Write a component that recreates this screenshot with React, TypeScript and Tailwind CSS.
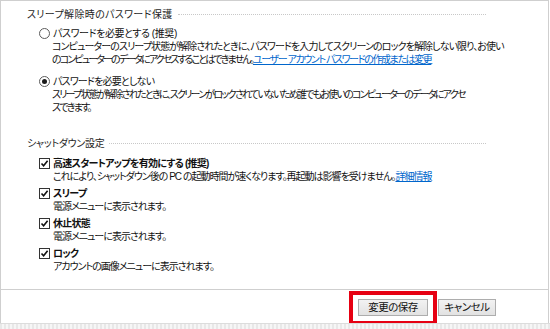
import React from 'react';

const font = "font-['Liberation_Sans','Noto_Sans_CJK_JP',sans-serif] [font-feature-settings:'palt']";

function Radio({ checked }: { checked?: boolean }) {
    return (
        <span className="w-[11px] h-[11px] rounded-full border border-[#5c5c5c] bg-white flex items-center justify-center shrink-0">
            {checked && <span className="w-[5px] h-[5px] rounded-full bg-[#1a1a1a]" />}
        </span>
    );
}

function Check() {
    return (
        <span className="w-[11px] h-[11px] border border-[#333] bg-white flex items-center justify-center shrink-0">
            <svg width="9" height="9" viewBox="0 0 9 9">
                <path d="M1.5 4.5 L3.6 6.8 L7.6 1.8" fill="none" stroke="#111" strokeWidth="1.6" />
            </svg>
        </span>
    );
}

function GroupTitle({ title, tracking }: { title: string; tracking: string }) {
    return (
        <div className="flex items-center gap-[5px] pl-[26px] pr-[62px] h-[16px]">
            <span className={`whitespace-nowrap text-[#1e1e1e] ${tracking}`}>{title}</span>
            <span className="flex-1 border-t border-dotted border-[#c8c8c8]" />
        </div>
    );
}

function CheckItem({ label, desc }: { label: string; desc: React.ReactNode }) {
    return (
        <div className="pl-[38px]">
            <div className="flex items-center gap-[3px] h-[14px]">
                <Check />
                <span className="font-bold whitespace-nowrap tracking-[-0.75px]">{label}</span>
            </div>
            <div className="pl-[14px] h-[14px] leading-[14px] whitespace-nowrap tracking-[-1px]">{desc}</div>
        </div>
    );
}

export default function App() {
    return (
        <div className={`w-[550px] h-[329px] bg-white flex flex-col text-[10px] leading-[13px] tracking-[-0.9px] text-[#111] ${font}`}>
            <div className="flex-1 flex flex-col border-l border-r border-t border-[#cfcfcf] mr-[1px]">
                <div className="pt-[5px]">
                    <GroupTitle title="スリープ解除時のパスワード保護" tracking="tracking-[0.35px]" />
                </div>

                {/* Password options */}
                <div className="pl-[38px] mt-[4px]">
                    <div className="flex items-center gap-[3px] h-[14px]">
                        <Radio />
                        <span className="whitespace-nowrap tracking-[-0.4px]">パスワードを必要とする (推奨)</span>
                    </div>
                    <div className="pl-[13px] whitespace-nowrap">
                        <div>コンピューターのスリープ状態が解除されたときに、パスワードを入力してスクリーンのロックを解除しない限り、お使い</div>
                        <div>
                            <span className="tracking-[-1.9px]">のコンピューターのデータにアクセスすることはできません。</span>
                            <span className="text-[#0066cc] underline tracking-[-1.4px]">ユーザー アカウント パスワードの作成または変更</span>
                        </div>
                    </div>

                    <div className="flex items-center gap-[3px] h-[14px] mt-[8px]">
                        <Radio checked />
                        <span className="whitespace-nowrap tracking-[-0.8px]">パスワードを必要としない</span>
                    </div>
                    <div className="pl-[13px] whitespace-nowrap tracking-[-1.75px]">
                        <div>スリープ状態が解除されたときに、スクリーンがロックされていないため誰でもお使いのコンピューターのデータにアクセ</div>
                        <div>スできます。</div>
                    </div>
                </div>

                <div className="mt-[21px]">
                    <GroupTitle title="シャットダウン設定" tracking="tracking-[-0.3px]" />
                </div>

                <div className="flex flex-col gap-[2px] mt-[5px]">
                    <CheckItem
                        label="高速スタートアップを有効にする (推奨)"
                        desc={<>これにより、シャットダウン後の PC の起動時間が速くなります。再起動は影響を受けません。<span className="text-[#0066cc] underline">詳細情報</span></>}
                    />
                    <CheckItem label="スリープ" desc="電源メニューに表示されます。" />
                    <CheckItem label="休止状態" desc="電源メニューに表示されます。" />
                    <CheckItem label="ロック" desc="アカウントの画像メニューに表示されます。" />
                </div>

                <div className="mt-auto border-t border-[#cfcfcf] h-[34px] flex items-start justify-end pr-[52px] tracking-normal">
                    <div className="border-[4px] border-[#e60012] px-[5px] pt-[4px] pb-[5px] mt-[1px] flex">
                        <button className="w-[70px] h-[17px] border border-[#adadad] bg-gradient-to-b from-[#f2f2f2] to-[#e2e2e2] text-[10.5px] leading-[15px] tracking-[-0.5px]">変更の保存</button>
                    </div>
                    <button className="w-[58px] h-[17px] mt-[9px] ml-[1px] border border-[#adadad] bg-gradient-to-b from-[#f2f2f2] to-[#e2e2e2] text-[10.5px] leading-[15px] tracking-[-0.5px]">キャンセル</button>
                </div>
            </div>
            <div className="h-[6px] bg-[repeating-linear-gradient(90deg,#e8e8e8_0px,#e8e8e8_2px,#f6f6f6_2px,#f6f6f6_4px)] border-t border-[#dcdcdc]" />
        </div>
    );
}
